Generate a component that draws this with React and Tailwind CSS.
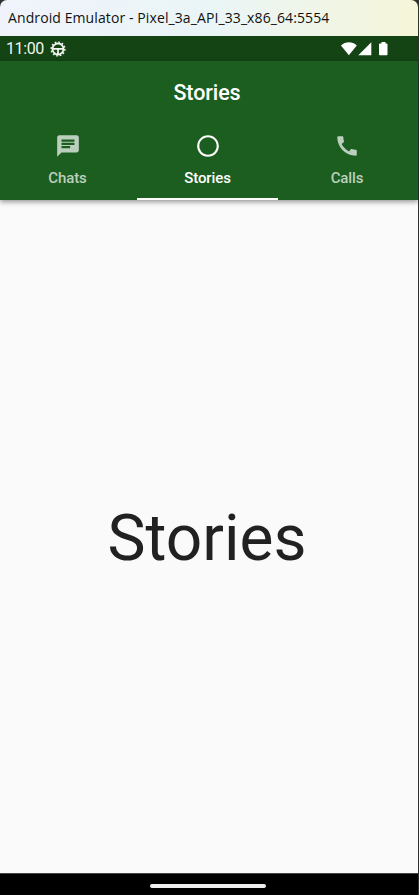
const tabs = [
  { label: 'Chats', icon: 'chat' },
  { label: 'Stories', icon: 'ring', active: true },
  { label: 'Calls', icon: 'call' },
];

function TabIcon({ name }) {
  return (
    <svg viewBox="0 0 24 24" className="h-[26px] w-[26px]" fill="currentColor">
      {name === 'chat' && (
        <path d="M20 2H4c-1.1 0-1.99.9-1.99 2L2 22l4-4h14c1.1 0 2-.9 2-2V4c0-1.1-.9-2-2-2zM6 9h12v2H6V9zm8 5H6v-2h8v2zm4-6H6V6h12v2z" />
      )}
      {name === 'ring' && (
        <path d="M12 2C6.48 2 2 6.48 2 12s4.48 10 10 10 10-4.48 10-10S17.52 2 12 2zm0 18c-4.42 0-8-3.58-8-8s3.58-8 8-8 8 3.58 8 8-3.58 8-8 8z" />
      )}
      {name === 'call' && (
        <path d="M20.01 15.38c-1.23 0-2.42-.2-3.53-.56-.35-.12-.74-.03-1.01.24l-1.57 1.97c-2.83-1.35-5.48-3.9-6.89-6.83l1.95-1.66c.27-.28.35-.67.24-1.02-.37-1.11-.56-2.3-.56-3.53 0-.54-.45-.99-.99-.99H4.19C3.65 3 3 3.24 3 3.99 3 13.28 10.73 21 20.01 21c.71 0 .99-.63.99-1.18v-3.45c0-.54-.45-.99-.99-.99z" />
      )}
    </svg>
  );
}

function StatusBar() {
  return (
    <div className="flex h-[25px] shrink-0 items-center bg-[#144414] pl-[6px] pr-[29px] text-[#f0f5f0]">
      <span className="pt-px text-[16px] leading-[24px] tracking-[-0.4px]">11:00</span>
      <svg viewBox="0 0 16 16" className="ml-[6px] h-4 w-4" fill="none" stroke="currentColor">
        <circle cx="8" cy="8" r="5.5" strokeWidth="1.8" />
        <circle cx="8" cy="8" r="6.9" strokeWidth="1.4" strokeDasharray="1.806 1.806" />
        <path d="M3 7.8h10M8 8v5" strokeWidth="1.8" />
      </svg>
      <svg viewBox="0 0 48 15" className="ml-auto h-[15px] w-[48px] text-white" fill="currentColor">
        <path d="M0 4.6C4.6.2 11.200.2 15.800 4.600L7.900 14.200z" />
        <path d="M17.300 14.300 30.300 1.200v13.100z" />
        <path d="M40.500.9h4v1.500h1.200c.5 0 .8.3.8.8v10.300c0 .5-.3.8-.8.8h-6.900c-.5 0-.8-.3-.8-.8V3.200c0-.5.3-.8.8-.8h1.700z" />
      </svg>
    </div>
  );
}

export default function App() {
  return (
    <div className="flex h-[895px] w-[419px] flex-col overflow-hidden bg-[#303030] pr-px font-['Roboto',sans-serif]">
      <div className="flex h-9 shrink-0 items-center rounded-t-[7px] bg-linear-to-r from-[#f0f3fb] via-[#eaf5f7] to-[#f5f5d8] pl-2">
        <span className="whitespace-nowrap font-['Open_Sans',sans-serif] text-[14px] leading-5 tracking-[0.1px] text-[#111]">
          Android Emulator - Pixel_3a_API_33_x86_64:5554
        </span>
      </div>
      <StatusBar />
      <header className="relative flex h-[139px] shrink-0 flex-col bg-[#1b5e20] text-white shadow-[0_2px_5px_rgba(0,0,0,0.4)]">
        <h1 className="h-[61px] pr-[4px] pt-[2px] text-center text-[21.5px] font-medium leading-[60px] tracking-[-0.1px]">
          Stories
        </h1>
        <nav className="grid flex-1 grid-cols-[137px_141px_140px]">
          {tabs.map((t) => (
            <div
              key={t.label}
              className={
                'flex flex-col items-center border-b-2 pt-[11px] text-[15px] font-medium leading-5 tracking-[-0.1px] ' +
                (t.active ? 'border-white text-white' : 'border-transparent pr-[2px] text-[#bbcfbc]')
              }
            >
              <TabIcon name={t.icon} />
              <span className="mt-[9px]">{t.label}</span>
            </div>
          ))}
        </nav>
      </header>
      <main className="flex flex-1 items-center justify-center bg-[#fafafa] pr-[4px] pt-[4px] text-[64px] text-[#212121]">
        Stories
      </main>
      <footer className="flex h-[22px] shrink-0 items-center justify-center border-t border-[#444] bg-black pr-[3px] pt-[2px]">
        <div className="h-[4px] w-[116px] rounded-full bg-[#eee]" />
      </footer>
    </div>
  );
}
